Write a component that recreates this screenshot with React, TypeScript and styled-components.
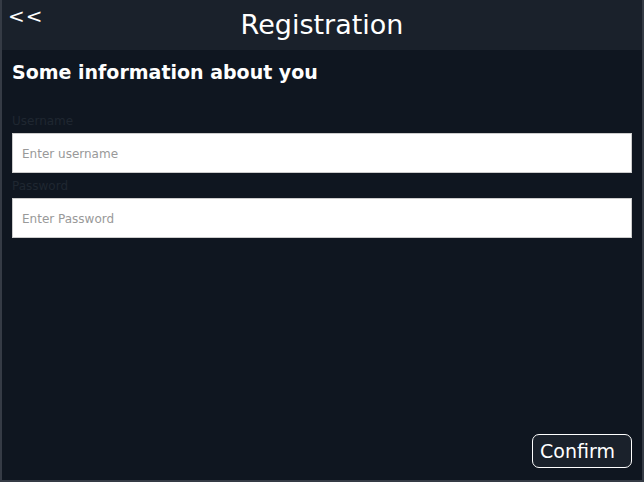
import React from "react";
import styled, { createGlobalStyle } from "styled-components";

const Global = createGlobalStyle`
  html, body { margin: 0; padding: 0; background: #0f1620; }
  * { box-sizing: border-box; }
  body { font-family: "DejaVu Sans", "Liberation Sans", sans-serif; }
`;

const Frame = styled.div`
  width: 644px;
  height: 482px;
  border: 2px solid #353b45;
  border-top: none;
  background: #0f1620;
  display: flex;
  flex-direction: column;
`;

const Header = styled.header`
  height: 50px;
  background: #1a212b;
  display: grid;
  grid-template-columns: 60px 1fr 60px;
  align-items: start;
`;

const Back = styled.button`
  background: none;
  border: none;
  color: #ffffff;
  font-family: "DejaVu Sans", sans-serif;
  font-size: 20px;
  padding: 4px 0 0 6px;
  text-align: left;
  cursor: pointer;
  letter-spacing: 1px;
`;

const Title = styled.h1`
  margin: 0;
  text-align: center;
  color: #ffffff;
  font-weight: normal;
  font-size: 27px;
  line-height: 50px;
`;

const Content = styled.main`
  flex: 1;
  display: flex;
  flex-direction: column;
  padding: 10px 10px 12px 10px;
`;

const Heading = styled.h2`
  margin: 0 0 28px 0;
  color: #ffffff;
  font-size: 19px;
  font-weight: bold;
  line-height: 25px;
`;

const Field = styled.label`
  display: flex;
  flex-direction: column;
  margin-bottom: 5px;
`;

const Label = styled.span`
  color: #1f2731;
  font-size: 12px;
  line-height: 16px;
  margin-bottom: 4px;
`;

const Input = styled.input`
  height: 40px;
  width: 100%;
  border: 1px solid #cccccc;
  background: #ffffff;
  padding: 1px 9px 0 9px;
  font-family: "DejaVu Sans", sans-serif;
  font-size: 12px;
  color: #333;
  outline: none;
  &::placeholder { color: #999999; }
`;

const Footer = styled.div`
  margin-top: auto;
  display: flex;
  justify-content: flex-end;
`;

const Confirm = styled.button`
  background: #1a212b;
  border: 1px solid #ffffff;
  border-radius: 7px;
  color: #ffffff;
  font-family: "DejaVu Sans", sans-serif;
  font-size: 19px;
  height: 34px;
  width: 100px;
  padding: 0 7px;
  text-align: left;
  cursor: pointer;
`;

export default function App() {
  return (
    <>
      <Global />
      <Frame>
        <Header>
          <Back>&lt;&lt;</Back>
          <Title>Registration</Title>
          <span />
        </Header>
        <Content>
          <Heading>Some information about you</Heading>
          <Field>
            <Label>Username</Label>
            <Input placeholder="Enter username" />
          </Field>
          <Field>
            <Label>Password</Label>
            <Input type="password" placeholder="Enter Password" />
          </Field>
          <Footer>
            <Confirm>Confirm</Confirm>
          </Footer>
        </Content>
      </Frame>
    </>
  );
}
